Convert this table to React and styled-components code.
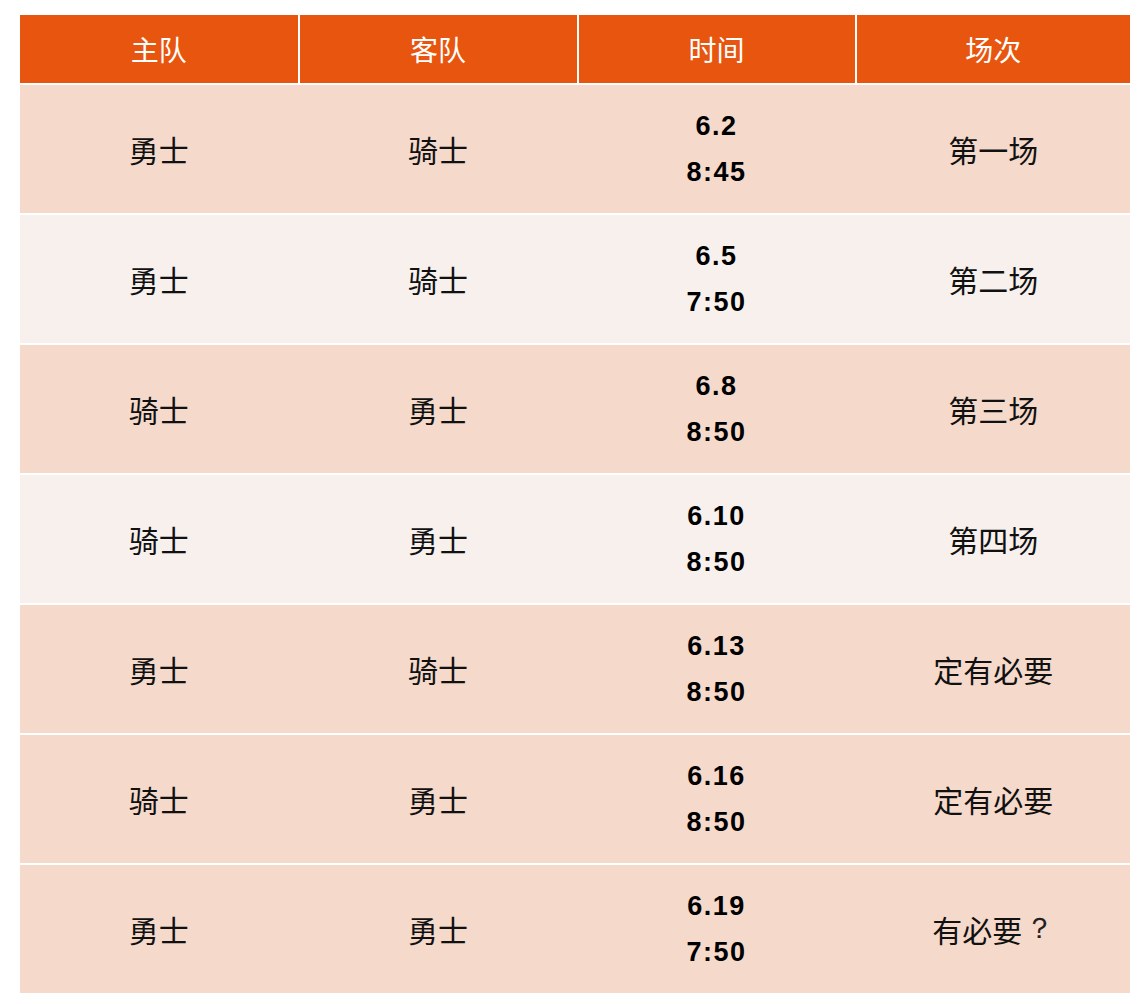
import React from "react";
import styled, { createGlobalStyle } from "styled-components";

const Global = createGlobalStyle`
  html, body { margin: 0; padding: 0; background: #ffffff; }
  body { font-family: "Liberation Sans", "Noto Sans CJK SC", sans-serif; }
`;

const Page = styled.div`
  padding: 15px 16px 0 20px;
`;

const Table = styled.div`
  width: 1110px;
  display: flex;
  flex-direction: column;
  gap: 2px;
`;

const HeaderRow = styled.div`
  display: grid;
  grid-template-columns: 277.5px 277px 276px 273.5px;
  column-gap: 2px;
  height: 68px;
`;

const HeaderCell = styled.div`
  background: #e8550e;
  color: #ffffff;
  display: flex;
  align-items: center;
  justify-content: center;
  font-family: "Noto Sans CJK SC", "Liberation Sans", sans-serif;
  font-size: 28px;
  font-weight: 400;
`;

const Row = styled.div`
  display: grid;
  grid-template-columns: 277.5px 277px 276px 273.5px;
  column-gap: 2px;
  height: 128px;
  background: ${(p) => (p.$light ? "#f7f0ed" : "#f5d9cb")};
`;

const Cell = styled.div`
  display: flex;
  align-items: center;
  justify-content: center;
  color: #111111;
  font-family: "Noto Sans CJK SC", "Liberation Sans", sans-serif;
  font-size: 30px;
  font-weight: 400;
`;

const Punct = styled.span`
  margin-left: 3px;
  font-family: "Liberation Sans", sans-serif;
  font-size: 29px;
  color: #222222;
`;

const TimeCell = styled.div`
  display: flex;
  flex-direction: column;
  align-items: center;
  justify-content: center;
  color: #000000;
  font-family: "Liberation Sans", Arial, sans-serif;
  font-weight: 700;
  font-size: 27px;
  line-height: 46px;
  letter-spacing: 1.5px;
`;

const rows = [
  ["勇士", "骑士", "6.2", "8:45", "第一场"],
  ["勇士", "骑士", "6.5", "7:50", "第二场"],
  ["骑士", "勇士", "6.8", "8:50", "第三场"],
  ["骑士", "勇士", "6.10", "8:50", "第四场"],
  ["勇士", "骑士", "6.13", "8:50", "定有必要"],
  ["骑士", "勇士", "6.16", "8:50", "定有必要"],
  ["勇士", "勇士", "6.19", "7:50", "有必要", "？"],
];

export default function App() {
  return (
    <Page>
      <Global />
      <Table>
        <HeaderRow>
          <HeaderCell>主队</HeaderCell>
          <HeaderCell>客队</HeaderCell>
          <HeaderCell>时间</HeaderCell>
          <HeaderCell>场次</HeaderCell>
        </HeaderRow>
        {rows.map((r, i) => (
          <Row key={i} $light={i === 1 || i === 3}>
            <Cell>{r[0]}</Cell>
            <Cell>{r[1]}</Cell>
            <TimeCell>
              <span>{r[2]}</span>
              <span>{r[3]}</span>
            </TimeCell>
            <Cell>
              {r[4]}
              {r[5] && <Punct>{r[5]}</Punct>}
            </Cell>
          </Row>
        ))}
      </Table>
    </Page>
  );
}
